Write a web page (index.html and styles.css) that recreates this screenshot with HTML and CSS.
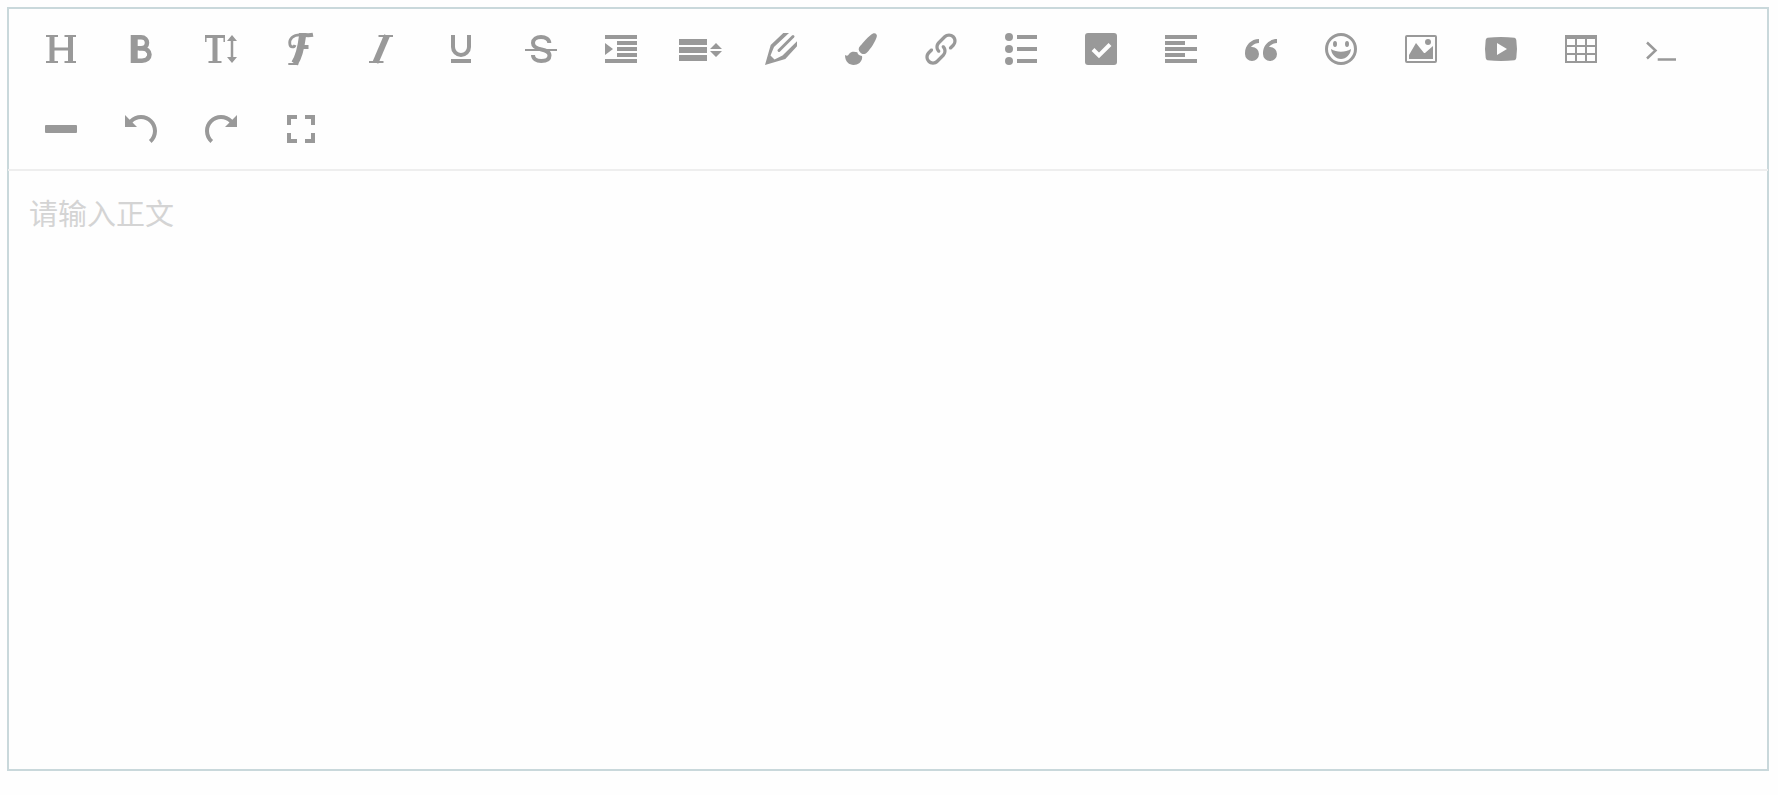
FILE: index.html
```html
<!DOCTYPE html>
<html lang="zh-CN">
<head>
    <meta charset="UTF-8">
    <meta name="viewport" content="width=device-width, initial-scale=1.0">
    <title>编辑器</title>
    <link rel="stylesheet" href="styles.css">
</head>
<body>
    <div class="editor">
        <div class="toolbar" role="toolbar" aria-label="工具栏">
            <button type="button" aria-label="标题">
                <svg viewBox="0 0 32 32"><path class="line" stroke-width="5" d="M7 3v26M25.500 3v26"/><path class="line" stroke-width="2" d="M1 3h12M19.500 3H31M1 29h12M19.500 29H31"/><path class="line" stroke-width="3" d="M7 16h18"/></svg>
            </button>
            <button type="button" aria-label="加粗">
                <svg viewBox="0 0 32 32"><path class="line" stroke-width="7" d="M9.200 2v28"/><path class="line" stroke-width="4.500" d="M10 4.250h6c8 0 8 11 0 11H10M14 15.500h3c10 0 10 12.200 0 12.200H10"/><path class="line" stroke-width="3" d="M20.500 6.500q3 3.500 0 7M21.500 17.500q4.500 4 0 8"/></svg>
            </button>
            <button type="button" aria-label="字号">
                <svg viewBox="0 0 32 32"><path class="line" stroke-width="5" d="M10 3v26"/><path class="line" stroke-width="2" d="M3.500 29h13"/><path class="line" stroke-width="2.500" d="M27 7v18"/><path class="line" stroke-width="3" d="M0 3.500h20"/><path class="line" stroke-width="1.500" d="M.8 3v6M19.200 3v6"/><path d="M22 8l5-6 5 6zM22 24l5 6 5-6z"/></svg>
            </button>
            <button type="button" aria-label="字体">
                <svg viewBox="0 0 32 32"><path class="line" stroke-width="4" d="M28 1.800c-5 1-9-.2-14 .3"/><path class="line" stroke-width="2.800" d="M15 1.800C8 1.800 4 6 4.800 11c.5 4 4.500 3.500 5.200 1"/><path class="line" stroke-width="7" d="M17.500 3C16 15 14 24 9.500 30.500"/><path class="line" stroke-width="4" d="M16 14h7.500"/><path class="line" stroke-width="2" d="M3.300 31h10"/></svg>
            </button>
            <button type="button" aria-label="斜体">
                <svg viewBox="0 0 32 32"><path class="line" stroke-width="2" d="M13.500 3H28M4 29h14.500"/><path class="line" stroke-width="6" d="M22 2.500L10.500 29.500"/></svg>
            </button>
            <button type="button" aria-label="下划线">
                <svg viewBox="0 0 32 32"><path class="line" stroke-width="4" d="M8 2v12a8 8 0 0 0 16 0V2M6 28h20"/></svg>
            </button>
            <button type="button" aria-label="删除线">
                <svg viewBox="0 0 32 32"><path class="line" stroke-width="4" d="M24.300 10c0-3.500-3.700-6-8.300-6s-8 2.500-8 6c0 4 4 5.500 8.500 6.500s8 2 8 6-3.500 5.500-8.300 5.500S8 25.500 8 22"/><path class="line" stroke-width="2" d="M0 17h32"/></svg>
            </button>
            <button type="button" aria-label="缩进">
                <svg viewBox="0 0 32 32"><path d="M0 2h32v4H0zM12 8h20v4H12zM12 14h20v4H12zM12 20h20v4H12zM0 26h32v4H0zM0 10l8 6-8 6z"/></svg>
            </button>
            <button type="button" aria-label="行高">
                <svg viewBox="0 0 32 32"><path d="M-6 6h28v6H-6zM-6 14h28v6H-6zM-6 22h28v6H-6zM25 16l6-6 6 6zM25 18l6 6 6-6z"/></svg>
            </button>
            <button type="button" aria-label="文字颜色">
                <svg viewBox="0 0 32 32"><path d="M0 32L5.700 12 18.300 0H24L9 14 5.500 22.500 9.500 26.500l8-4L32 8.300v5L20.300 26z"/><path class="line" stroke-width="3" stroke-linecap="round" d="M28 3.500L14 17.500"/></svg>
            </button>
            <button type="button" aria-label="背景颜色">
                <svg viewBox="0 0 32 32"><path d="M28 .4c2.500-1 4.600 1 3.700 3.600-1.700 5-5.700 11.500-9.700 15.500-2.300 2.300-4.700 2-6.700 0s-2.300-4.300 0-6.700C18.500 9 23.500 3 28 .4z"/><path d="M0 22c2.500 1.500 3 .5 4-1 2-3 6-2.500 8.300-1.700.5 2 1.800 3.400 4.700 3.700.6 2-.2 5-2.500 7C9.500 33.700 0 32.500 0 22z"/></svg>
            </button>
            <button type="button" aria-label="链接">
                <svg viewBox="0 0 32 32"><path d="M13.757 19.868c-.416 0-.832-.159-1.149-.476-2.973-2.973-2.973-7.810 0-10.783l6-6c1.440-1.440 3.355-2.233 5.392-2.233s3.951.793 5.392 2.233c2.973 2.973 2.973 7.810 0 10.783l-2.743 2.743c-.635.635-1.663.635-2.298 0s-.635-1.663 0-2.298l2.743-2.743c1.706-1.706 1.706-4.481 0-6.187-.826-.826-1.925-1.281-3.094-1.281s-2.267.455-3.094 1.281l-6 6c-1.706 1.706-1.706 4.481 0 6.187.635.635.635 1.663 0 2.298-.317.317-.733.476-1.149.476z"/><path d="M8 31.625c-2.037 0-3.952-.793-5.392-2.233-2.973-2.973-2.973-7.810 0-10.783l2.743-2.743c.635-.635 1.664-.635 2.298 0s.635 1.663 0 2.298l-2.743 2.743c-1.706 1.706-1.706 4.481 0 6.187.826.826 1.925 1.281 3.094 1.281s2.267-.455 3.094-1.281l6-6c1.706-1.706 1.706-4.481 0-6.187-.635-.635-.635-1.663 0-2.298s1.663-.635 2.298 0c2.973 2.973 2.973 7.810 0 10.783l-6 6c-1.440 1.440-3.355 2.233-5.392 2.233z"/></svg>
            </button>
            <button type="button" aria-label="列表">
                <svg viewBox="0 0 32 32"><circle cx="4" cy="4" r="4"/><circle cx="4" cy="16" r="4"/><circle cx="4" cy="28" r="4"/><path d="M12 2h20v4H12zM12 14h20v4H12zM12 26h20v4H12z"/></svg>
            </button>
            <button type="button" aria-label="待办事项">
                <svg viewBox="0 0 32 32"><rect width="32" height="32" rx="3"/><path class="tick" d="M8 16.500l6 6L25 11.500"/></svg>
            </button>
            <button type="button" aria-label="对齐">
                <svg viewBox="0 0 32 32"><path d="M0 2h32v4H0zM0 8h20v4H0zM0 14h32v4H0zM0 20h20v4H0zM0 26h32v4H0z"/></svg>
            </button>
            <button type="button" aria-label="引用">
                <svg viewBox="0 0 32 32"><path d="M7 14a7 7 0 1 1-7 7v-1C0 12.268 6.268 6 14 6v4c-2.671 0-5.182 1.040-7.071 2.929-.364.364-.695.751-.995 1.157C6.300 14.030 6.600 14 7 14zM25 14a7 7 0 1 1-7 7v-1c0-7.732 6.268-14 14-14v4c-2.671 0-5.182 1.040-7.071 2.929-.364.364-.695.751-.995 1.157.366-.056.666-.086 1.066-.086z"/></svg>
            </button>
            <button type="button" aria-label="表情">
                <svg viewBox="0 0 32 32"><circle class="line" cx="16" cy="16" r="14.500" stroke-width="3"/><ellipse cx="10" cy="11" rx="2" ry="3"/><ellipse cx="22" cy="11" rx="2" ry="3"/><path d="M16 18.711c3.623 0 7.070-.963 10-2.654C25.545 21.633 21.215 26 16 26S6.456 21.629 6.001 16.053c2.929 1.691 6.377 2.658 9.999 2.658z"/></svg>
            </button>
            <button type="button" aria-label="图片">
                <svg viewBox="0 0 32 32"><rect class="line" x="1" y="3" width="30" height="26" rx="1" stroke-width="2"/><circle cx="23" cy="9" r="3"/><path d="M4 26v-4l7-12 8 10h1l8-7v13z"/></svg>
            </button>
            <button type="button" aria-label="视频">
                <svg viewBox="0 0 32 32"><path fill-rule="evenodd" d="M2.500 4.800Q16 3.200 29.500 4.800 31 5 31.300 7 32.700 16 31.300 25 31 27 29.500 27.200 16 28.800 2.500 27.200 1 27 .7 25-.7 16 .7 7 1 5 2.500 4.800zM12 10v12l10-6z"/></svg>
            </button>
            <button type="button" aria-label="表格">
                <svg viewBox="0 0 32 32"><path fill-rule="evenodd" d="M0 2h32v28H0zM2 6v6h8V6zM12 6v6h8V6zM22 6v6h8V6zM2 14v6h8v-6zM12 14v6h8v-6zM22 14v6h8v-6zM2 22v6h8v-6zM12 22v6h8v-6zM22 22v6h8v-6z"/></svg>
            </button>
            <button type="button" aria-label="代码">
                <svg viewBox="0 0 32 32"><path class="line" stroke-width="2.500" d="M2 9.500l8.500 8L2 25.500"/><path class="line" stroke-width="2.500" d="M12.700 26.500H31"/></svg>
            </button>
            <button type="button" aria-label="分割线">
                <svg viewBox="0 0 32 32"><rect y="12" width="32" height="8" rx="1"/></svg>
            </button>
            <button type="button" aria-label="撤销">
                <svg viewBox="0 0 32 32"><path d="M16 2C11.582 2 7.582 3.791 4.687 6.687L0 2v12h12L7.515 9.515C9.687 7.343 12.687 6 16 6c6.627 0 12 5.373 12 12 0 3.584-1.572 6.801-4.063 9l2.646 3C29.905 27.068 32 22.779 32 18c0-8.837-7.163-16-16-16z"/></svg>
            </button>
            <button type="button" aria-label="恢复">
                <svg viewBox="0 0 32 32"><path d="M0 18c0 4.779 2.095 9.068 5.417 12l2.646-3C5.572 24.801 4 21.584 4 18 4 11.373 9.373 6 16 6c3.314 0 6.314 1.343 8.485 3.515L20 14h12V2l-4.687 4.687C24.418 3.791 20.418 2 16 2 7.163 2 0 9.163 0 18z"/></svg>
            </button>
            <button type="button" aria-label="全屏">
                <svg viewBox="0 0 32 32"><path class="line" stroke-width="4" d="M4 12V4h8M20 4h8v8M28 20v8h-8M12 28H4v-8"/></svg>
            </button>
        </div>
        <textarea class="content" placeholder="请输入正文" aria-label="正文"></textarea>
    </div>
</body>
</html>
```

FILE: styles.css
```css
body {
    margin: 7px 9px 24px 7px;
    background-color: #fefefe;
    font-family: "Noto Sans", "Noto Sans CJK SC", sans-serif;
}

.editor {
    border: 2px solid #c9d8db;
}

/* Toolbar */
.toolbar {
    display: flex;
    flex-wrap: wrap;
    margin: 0 -1px;
    padding: 0 13px;
    border-bottom: 2px solid #eee;
}

.toolbar button {
    display: flex;
    align-items: center;
    justify-content: center;
    width: 80px;
    height: 80px;
    padding: 0;
    border: none;
    background: none;
    color: #999;
    cursor: pointer;
}

.toolbar button:hover {
    color: #333;
}

/* Icons */
.toolbar svg {
    width: 32px;
    height: 32px;
    overflow: visible;
    fill: currentColor;
}

.toolbar .line {
    fill: none;
    stroke: currentColor;
}

.toolbar .tick {
    fill: none;
    stroke: #fefefe;
    stroke-width: 4;
}

/* Text area */
.content {
    display: block;
    box-sizing: border-box;
    width: 100%;
    height: 598px;
    padding: 20px;
    border: none;
    outline: none;
    resize: none;
    background: none;
    color: #333;
    font-family: inherit;
    font-size: 29px;
    line-height: 46px;
}

.content::placeholder {
    color: #d4d4d4;
    opacity: 1;
}
```
